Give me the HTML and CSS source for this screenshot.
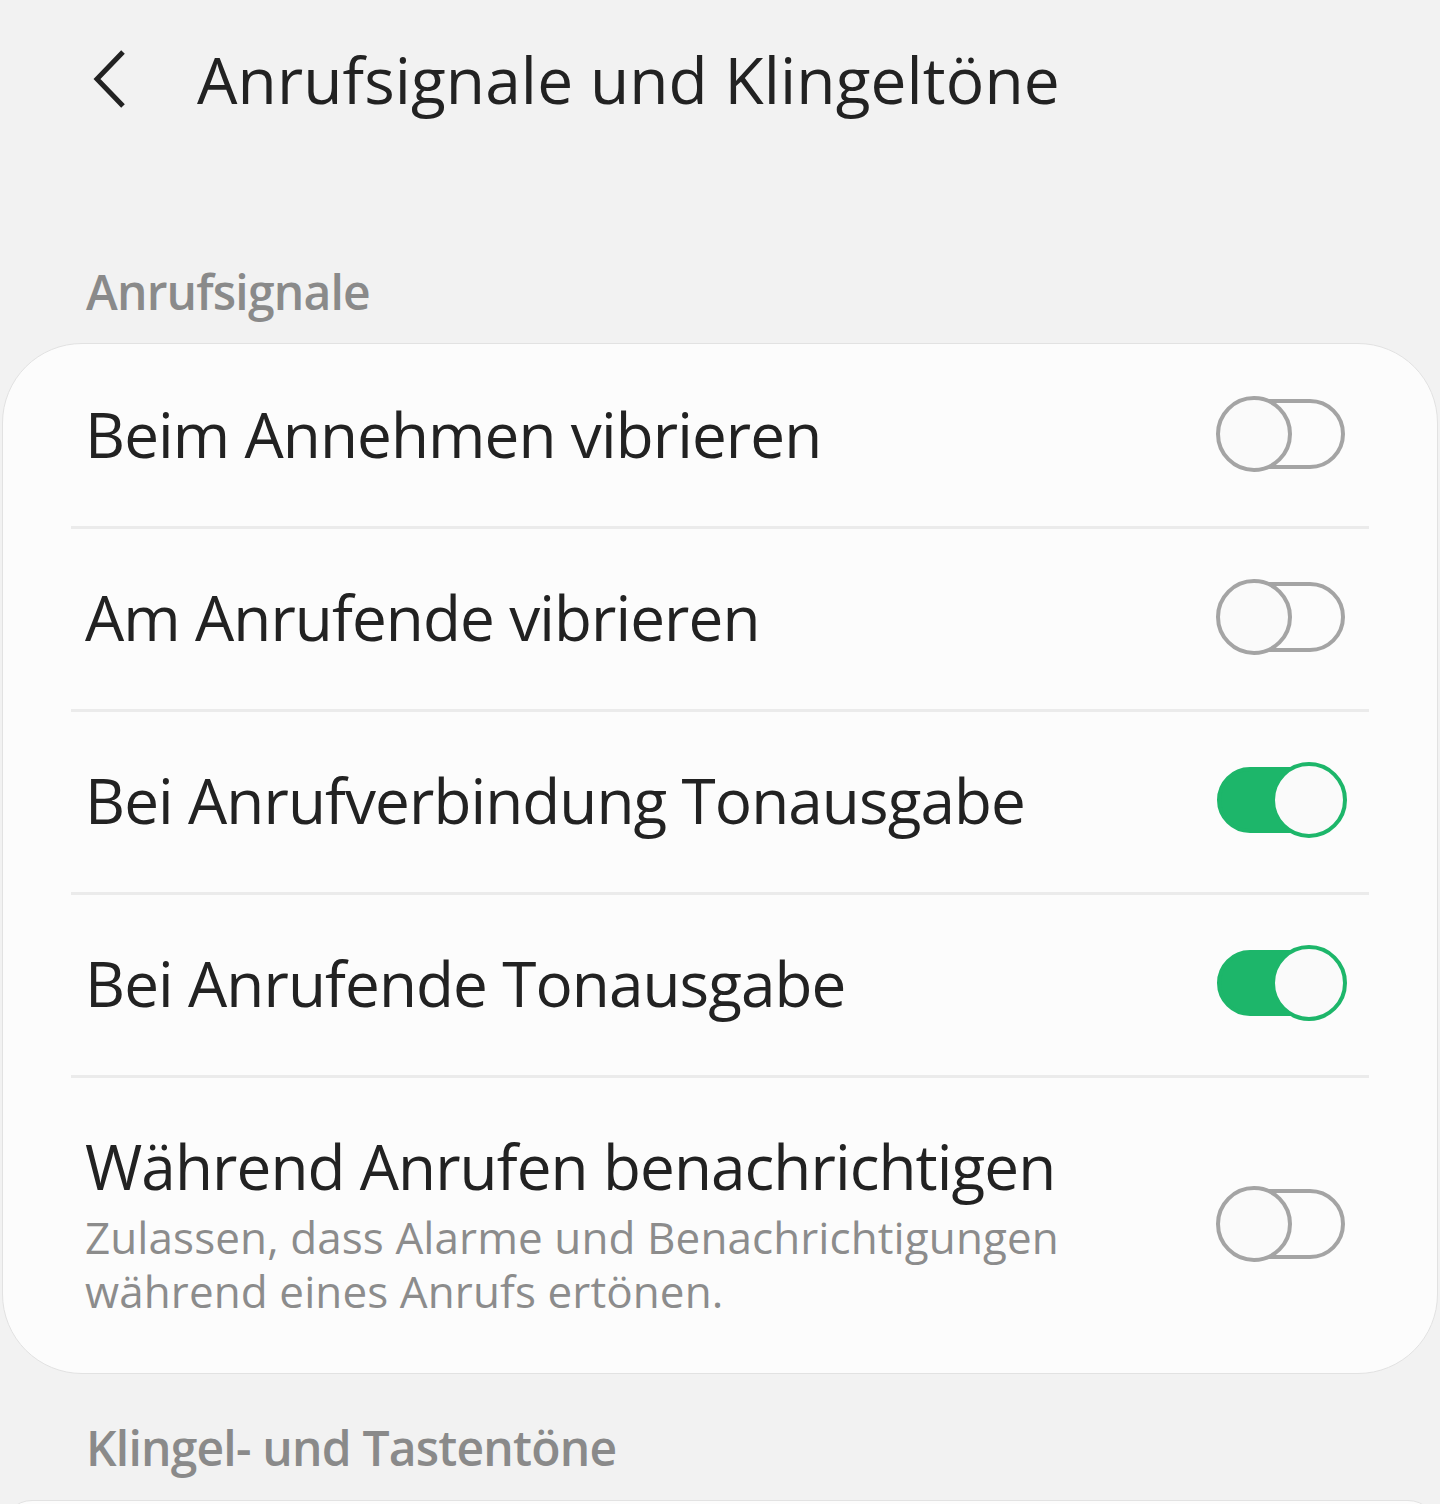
FILE: index.html
```html
<!DOCTYPE html>
<html lang="de">
<head>
<meta charset="utf-8">
<link rel="stylesheet" href="styles.css">
</head>
<body>
<div class="page">
  <header class="appbar">
    <span class="back">
      <svg width="40" height="60" viewBox="0 0 40 60"><path d="M32 3 L6 30 L32 57" fill="none" stroke="#222" stroke-width="5"/></svg>
    </span>
    <h1 class="title">Anrufsignale und Klingeltöne</h1>
  </header>

  <div class="section-label">Anrufsignale</div>
  <div class="card">
    <div class="row">
      <div class="row-text"><div class="row-title">Beim Annehmen vibrieren</div></div>
      <span class="switch"></span>
    </div>
    <div class="row">
      <div class="row-text"><div class="row-title">Am Anrufende vibrieren</div></div>
      <span class="switch"></span>
    </div>
    <div class="row">
      <div class="row-text"><div class="row-title">Bei Anrufverbindung Tonausgabe</div></div>
      <span class="switch on"></span>
    </div>
    <div class="row">
      <div class="row-text"><div class="row-title">Bei Anrufende Tonausgabe</div></div>
      <span class="switch on"></span>
    </div>
    <div class="row row-tall">
      <div class="row-text">
        <div class="row-title">Während Anrufen benachrichtigen</div>
        <div class="row-sub">Zulassen, dass Alarme und Benachrichtigungen während eines Anrufs ertönen.</div>
      </div>
      <span class="switch"></span>
    </div>
  </div>

  <div class="section-label second">Klingel- und Tastentöne</div>
  <div class="card next"></div>
</div>
</body>
</html>
```
FILE: styles.css
```css
* { box-sizing: border-box; }
html, body { margin: 0; padding: 0; }
body {
  background: #f2f2f2;
  font-family: "Open Sans", "Noto Sans", sans-serif;
  color: #222;
  width: 1440px;
  height: 1504px;
  overflow: hidden;
}
.page { padding: 0 2px; }
.appbar {
  display: flex;
  align-items: center;
  height: 160px;
  padding-left: 89px;
}
.back { display: flex; width: 40px; height: 60px; margin-top: -2px; }
.title {
  margin: 0 0 0 66px;
  font-weight: 400;
  font-size: 64px;
  line-height: 1;
  letter-spacing: 0.1px;
  color: #222;
}
.section-label {
  margin-top: 108px;
  padding-left: 84px;
  font-size: 48px;
  font-weight: 600;
  color: #8a8a8a;
  line-height: 1;
  letter-spacing: -0.8px;
  height: 75px;
}
.section-label.second { margin-top: 50px; height: 76px; }
.card {
  background: #fcfcfc;
  border: 1.5px solid #e2e2e2;
  border-radius: 80px;
  padding: 2px 68px 0;
}
.card.next { height: 60px; }
.row {
  display: flex;
  align-items: center;
  justify-content: space-between;
  height: 183px;
  border-bottom: 3px solid #ebebeb;
  padding: 0 24px 4px 14px;
}
.row-tall { height: 295px; border-bottom: none; padding-bottom: 4px; }
.row-title { font-size: 62px; line-height: 1.2; letter-spacing: -0.9px; }
.row-sub {
  font-size: 44px;
  line-height: 54px;
  color: #8c8c8c;
  margin-top: 7px;
  width: 1000px;
  letter-spacing: 0.1px;
}
.switch {
  position: relative;
  flex: none;
  width: 128px;
  height: 70px;
  border: 4px solid #a4a4a4;
  border-radius: 35px;
}
.switch::after {
  content: "";
  position: absolute;
  left: -5px;
  top: -7px;
  width: 76px;
  height: 76px;
  border-radius: 50%;
  border: 4px solid #a4a4a4;
  background: #fafafa;
  box-sizing: border-box;
}
.switch.on {
  background: #1db66a;
  border-color: #1db66a;
  height: 66px;
}
.switch.on::after {
  left: auto;
  right: -6px;
  top: -9px;
  width: 76px;
  height: 76px;
  border-color: #1db66a;
}
```
